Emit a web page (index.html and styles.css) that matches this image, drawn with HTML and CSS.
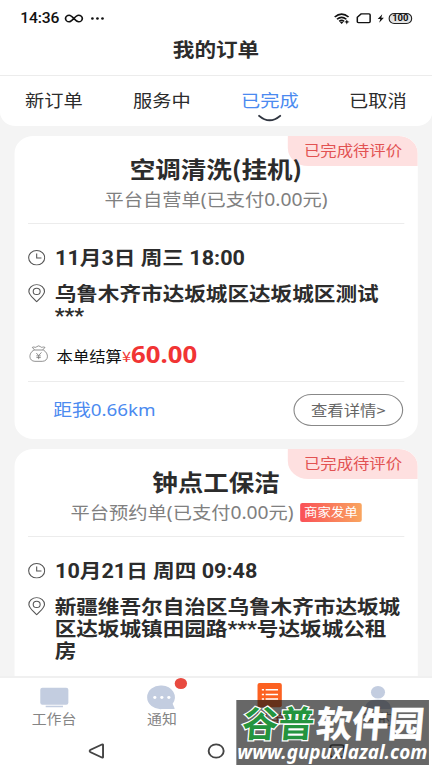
FILE: index.html
```html
<!DOCTYPE html>
<html lang="zh-CN">
<head>
<meta charset="utf-8">
<title>我的订单</title>
<link rel="stylesheet" href="styles.css">
</head>
<body>
<svg class="defs" width="0" height="0" aria-hidden="true">
  <symbol id="clock" viewBox="0 0 16 16"><circle cx="8" cy="8" r="7.4"/><path d="M8 3.6V8.2H12.400"/></symbol>
  <symbol id="pin" viewBox="0 0 16 19"><path d="M8 18.300C5.600 15 .8 11.400 .8 7.600A7.200 7 0 0 1 15.200 7.600C15.200 11.400 10.400 15 8 18.300Z"/><circle cx="8" cy="7.600" r="3.200"/></symbol>
  <symbol id="bag" viewBox="0 0 18 18"><path d="M4.600 5.200C-1 9-.5 17 5.500 17.300H12.500C18.500 17 19 9 13.400 5.200M4.500 5.300H13.500M5 5L3 2.500C5 1.300 6 3.500 7.200 1.800Q9 0 10.800 1.800C12 3.500 13 1.300 15 2.500L13 5M6.800 8.500L9 11.200L11.700 7.800M9 11.200V15M6.800 11.500H11M6.900 13.300H11"/></symbol>
</svg>
<div class="app">
  <header class="status">
    <div class="status-left">
      <span class="time">14:36</span>
      <svg class="loop" viewBox="0 0 16 9"><path d="M8 4.500C6 2 5 1.200 3.800 1.200A3.200 3.200 0 0 0 3.800 7.800C6.500 7.800 9 1.200 12.200 1.200A3.200 3.200 0 0 1 12.200 7.800C11 7.800 10 7 8 4.500"/></svg>
      <svg class="dots" viewBox="0 0 12 3"><circle cx="1.500" cy="1.500" r="1.200"/><circle cx="6" cy="1.500" r="1.200"/><circle cx="10.500" cy="1.500" r="1.200"/></svg>
    </div>
    <div class="status-right">
      <svg class="wifi" viewBox="0 0 16 13"><path d="M.8 4.300Q7.500-2 14.200 4.300M3 6.800Q7.500 2.800 12 6.800M5.200 9Q7.500 7 9.800 9"/><path class="solid" d="M5.800 10Q7.500 8.800 9.200 10L7.500 12ZM12.500 7L13.300 8.900L15.300 9.700L13.300 10.400L12.500 12.400L11.700 10.400L9.800 9.700L11.700 8.900Z"/></svg>
      <svg class="sim" viewBox="0 0 14 11"><path d="M4.500 1H12Q13 1 13 2V9Q13 10 12 10H2Q1 10 1 9V4.500Z"/></svg>
      <svg class="bolt" viewBox="0 0 7 10"><path d="M5 0L.3 5.600H3L1.800 10L6.700 4.200H4Z"/></svg>
      <span class="battery">100</span>
    </div>
  </header>
  <h1 class="page-title">我的订单</h1>
  <nav class="tabs">
    <span class="tab">新订单</span>
    <span class="tab">服务中</span>
    <span class="tab active">已完成<svg class="smile" viewBox="0 0 24 9"><path d="M1.500 1.500Q12 11.500 22.500 1.500"/></svg></span>
    <span class="tab">已取消</span>
  </nav>
  <main class="list">
    <article class="card">
      <span class="badge">已完成待评价</span>
      <h2>空调清洗(挂机)</h2>
      <div class="sub"><span>平台自营单(已支付0.00元)</span></div>
      <div class="row date"><svg class="clock"><use href="#clock"/></svg><span>11月3日 周三 18:00</span></div>
      <div class="row address"><svg class="pin"><use href="#pin"/></svg><span>乌鲁木齐市达坂城区达坂城区测试<br>***</span></div>
      <div class="row settle"><svg class="bag"><use href="#bag"/></svg><span>本单结算</span><span class="yen">¥</span><b>60.00</b></div>
      <footer class="card-foot"><span class="distance">距我0.66km</span><span class="detail">查看详情&gt;</span></footer>
    </article>
    <article class="card">
      <span class="badge">已完成待评价</span>
      <h2>钟点工保洁</h2>
      <div class="sub"><span>平台预约单(已支付0.00元)</span><span class="tag">商家发单</span></div>
      <div class="row date"><svg class="clock"><use href="#clock"/></svg><span>10月21日 周四 09:48</span></div>
      <div class="row address"><svg class="pin"><use href="#pin"/></svg><span>新疆维吾尔自治区乌鲁木齐市达坂城<br>区达坂城镇田园路***号达坂城公租<br>房</span></div>
    </article>
  </main>
  <nav class="bottom">
    <div class="item"><svg class="nav-icon" viewBox="0 0 28 28"><rect x="1" y="4" width="26" height="17.500" rx="2"/><rect x="6" y="22.500" width="16" height="1.600"/></svg><span>工作台</span></div>
    <div class="item"><svg class="nav-icon" viewBox="0 0 28 28"><path d="M14 1.500A12.500 12.300 0 1 0 14 26H25.300Q26.300 26 25.700 25L24 20.500A12.500 12.300 0 0 0 14 1.500Z"/><g class="chat-dots"><circle cx="7.500" cy="14" r="1.500"/><circle cx="14" cy="14" r="1.500"/><circle cx="20.500" cy="14" r="1.500"/></g></svg><span>通知</span><i class="unread"></i></div>
    <div class="item current"><svg class="nav-icon" viewBox="0 0 28 28"><rect class="orange" x="2" y="-1" width="22.500" height="25" rx="2"/><path class="lines" d="M6 6H8M9.500 6H21M6 10.800H8M9.500 10.800H21M6 15.500H8M9.500 15.500H21"/></svg><span>订单</span></div>
    <div class="item"><svg class="nav-icon" viewBox="0 0 28 28"><circle cx="14" cy="8.500" r="6.500"/><path d="M2 26Q2 16 14 16T26 26Z"/></svg><span>我的</span></div>
  </nav>
  <div class="system">
    <svg viewBox="0 0 16 16"><path d="M14 1.700V14.300Q14 14.900 13 14.500L2.500 9Q1.500 8 2.500 7L13 1.500Q14 1.100 14 1.700Z"/></svg>
    <svg viewBox="0 0 16 16"><circle cx="8" cy="8" r="6.700"/></svg>
    <svg viewBox="0 0 16 16"><rect x="2" y="2" width="12" height="12" rx="2"/></svg>
  </div>
  <svg class="watermark" viewBox="0 0 192 65" preserveAspectRatio="none">
    <g transform="translate(5 37) skewX(-5)">
      <text class="wm-green" x="0" y="0" textLength="72">谷普</text>
      <text class="wm-white" x="74" y="0" textLength="108">软件园</text>
    </g>
    <text class="wm-url" x="1" y="59" textLength="190" lengthAdjust="spacingAndGlyphs">www.gupuxlazal.com</text>
  </svg>
</div>
</body>
</html>
```

FILE: styles.css
```css
* { box-sizing: border-box; margin: 0; padding: 0; }
html, body { width: 432px; height: 768px; overflow: hidden; background: #fff; }

/* Narrow layout widened to fill the 432px viewport */
.app {
  position: relative;
  display: flex;
  flex-direction: column;
  width: 385.71px;
  height: 768px;
  overflow: hidden;
  background: #f4f4f4;
  color: #2c2c2c;
  font-family: "Noto Sans CJK SC", sans-serif;
  white-space: nowrap;
  transform: scaleX(1.12);
  transform-origin: 0 0;
}
svg { display: block; flex: none; overflow: visible; fill: none; }
.defs { position: absolute; }

.status {
  display: flex;
  justify-content: space-between;
  flex: none;
  height: 37px;
  padding: 0 17.500px 0 18px;
  background: #fff;
  color: #111;
}
.status-left, .status-right { display: flex; align-items: center; height: 37px; }
.time { width: 35px; font: 500 14px/37px Roboto, sans-serif; letter-spacing: -.1px; }
.loop { width: 16px; height: 9px; margin-left: 5px; stroke: #111; stroke-width: 1.500; }
.dots { width: 12px; height: 3px; margin-left: 7px; fill: #111; }
.wifi { width: 15px; height: 12px; stroke: #111; stroke-width: 1.700; }
.wifi .solid { fill: #111; stroke: none; }
.sim { width: 13.500px; height: 10.500px; margin-left: 5px; stroke: #111; stroke-width: 1.400; }
.bolt { width: 6px; height: 9px; margin-left: 5px; fill: #111; }
.battery {
  width: 21.500px; height: 11px; margin-left: 4px;
  border: 1px solid #222; border-radius: 5px; background: #e4e4e4;
  font: 700 8.500px/9.500px Roboto, sans-serif; text-align: center;
}

.page-title {
  flex: none; height: 39px; border-bottom: 1px solid #ececec;
  background: #fff; font-size: 19.300px; line-height: 25px; text-align: center;
}
.tabs { display: flex; flex: none; height: 49.500px; background: #fff; border-radius: 0 0 14px 14px; }
.tab { position: relative; flex: 1; font-size: 17.200px; line-height: 48px; text-align: center; }
.active { color: #4b8af0; }
.smile { position: absolute; left: 37.500px; top: 37.500px; width: 21.500px; height: 9px; stroke: #303540; stroke-width: 2; stroke-linecap: round; }

.list { display: flex; flex-direction: column; gap: 10.500px; height: 550.500px; padding: 10.500px 12.500px 0; overflow: hidden; flex: none; }
.card { position: relative; flex: none; height: 302.500px; padding: 19px 12.500px 0; border-radius: 17px; background: #fff; overflow: hidden; }
.badge {
  position: absolute; right: 0; top: 0; width: 116px; height: 30px;
  border-radius: 0 17px 0 18px; background: #fee0e0; color: #e25252;
  font-size: 14.600px; line-height: 28px; text-align: center;
}
.card h2 { position: relative; height: 30px; font-size: 22.800px; line-height: 28px; text-align: center; }
.sub {
  display: flex; justify-content: center; align-items: center; gap: 6px;
  height: 39px; padding-bottom: 9px; border-bottom: 1px solid #ececec;
  color: #808080; font: 17.200px/30px "Noto Sans", "Noto Sans CJK SC", sans-serif;
}
.tag {
  width: 54.500px; height: 19px; border-radius: 2px;
  background: linear-gradient(90deg, #fa5057, #f9a55f); color: #fff;
  font: 12px/18.500px "Noto Sans CJK SC", sans-serif; text-align: center;
}
.row { display: flex; }
.row svg { stroke: #555; stroke-width: 1; }
.row .clock { width: 15.500px; height: 15.500px; margin: 1.500px 8.800px 0 -.2px; }
.row .pin { width: 15.500px; height: 18.500px; margin: 0 8.500px 0 -.2px; }
.date { height: 22px; margin-top: 24px; font: 700 19.300px/22px Roboto, "Noto Sans CJK SC", sans-serif; }
.address { margin-top: 13.500px; height: 44px; font: 700 19.300px/22px Roboto, "Noto Sans CJK SC", sans-serif; }
.settle { align-items: center; height: 30px; margin-top: 13px; color: #111; font-size: 14.600px; line-height: 30px; }
.settle .bag { width: 17px; height: 17px; margin: -4px 8px 0 .5px; stroke: #777; stroke-width: .8; }
.yen { color: #f13434; }
.settle b { color: #f13434; font: 700 23px/30px "Noto Sans", sans-serif; margin-top: -3px; }
.card-foot {
  display: flex; justify-content: space-between; align-items: center;
  height: 57px; margin-top: 10.500px; padding-left: 22.500px; border-top: 1px solid #ececec;
}
.distance { color: #4b8af0; font: 16.800px/32px "Noto Sans", "Noto Sans CJK SC", sans-serif; }
.detail {
  width: 98.500px; height: 32px; margin-right: .5px; border: 1px solid #888; border-radius: 16px;
  color: #666; font-size: 14.600px; line-height: 29px; text-align: center;
}

.bottom { display: flex; flex: none; height: 58px; border-top: 2px solid #f0f0f0; background: #fff; }
.item { position: relative; display: flex; flex: 1; flex-direction: column; align-items: center; padding-top: 6px; color: #858585; font-size: 13.300px; line-height: 18px; }
.item span { margin-top: -1px; }
.nav-icon { width: 27px; height: 27px; fill: #c3cde0; }
.chat-dots { fill: #fff; }
.orange { fill: #fc6121; }
.lines { stroke: #fff; stroke-width: 1.600; }
.current { color: #e2502c; }
.unread { position: absolute; left: 60px; top: -.5px; width: 11px; height: 11px; border-radius: 50%; background: #e84a40; }
.system { display: flex; flex: none; justify-content: space-between; height: 34px; padding: 9px 77px 0 78px; background: #fff; }
.system svg { width: 16px; height: 16px; stroke: #444; stroke-width: 1.700; }

.watermark { position: absolute; left: 211.200px; top: 699.500px; width: 171.430px; height: 65px; background: rgba(25, 25, 25, .66); }
.watermark text { font-family: "Noto Sans CJK SC", sans-serif; font-weight: 700; }
.watermark .wm-green { font-size: 36px; fill: #24943e; stroke: #fff; stroke-width: 2.500; paint-order: stroke; }
.watermark .wm-white { font-size: 36px; fill: #fff; stroke: #fff; stroke-width: .6; }
.watermark .wm-url { font: italic 700 19px "Noto Sans", sans-serif; fill: #fff; }
```
